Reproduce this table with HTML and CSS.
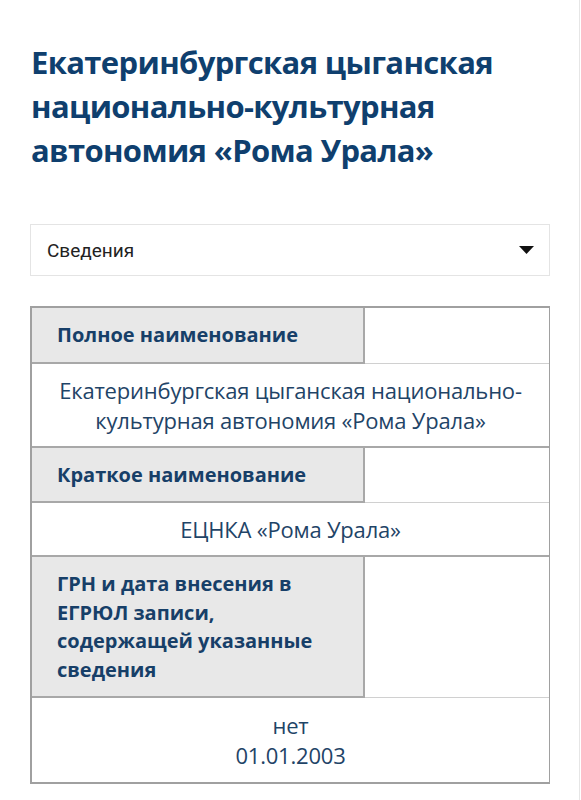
FILE: index.html
```html
<!DOCTYPE html>
<html lang="ru">
<head>
<meta charset="utf-8">
<title>Рома Урала</title>
<link rel="stylesheet" href="styles.css">
</head>
<body>
<div class="page">
  <h1 class="title">Екатеринбургская цыганская национально-культурная автономия «Рома Урала»</h1>
  <div class="select">
    <span class="select-text">Сведения</span>
    <svg class="select-arrow" width="15" height="8" viewBox="0 0 15 8"><path d="M0 0H15L7.5 8Z" fill="#111"/></svg>
  </div>
  <div class="info">
    <div class="row">
      <div class="label">Полное наименование</div>
      <div class="blank"></div>
    </div>
    <div class="value">Екатеринбургская цыганская национально-культурная автономия «Рома Урала»</div>
    <div class="row">
      <div class="label">Краткое наименование</div>
      <div class="blank"></div>
    </div>
    <div class="value">ЕЦНКА «Рома Урала»</div>
    <div class="row">
      <div class="label">ГРН и дата внесения в ЕГРЮЛ записи, содержащей указанные сведения</div>
      <div class="blank"></div>
    </div>
    <div class="value value-last">нет<br>01.01.2003</div>
  </div>
</div>
</body>
</html>
```

FILE: styles.css
```css
html, body {
  margin: 0;
  padding: 0;
  background: #fff;
}
.page {
  width: 580px;
  min-height: 800px;
  box-sizing: border-box;
  border-right: 1px solid #e6e6e6;
  padding: 40px 29px 0 30px;
}
.title {
  margin: 0 0 52px 1px;
  font-family: "Open Sans", sans-serif;
  font-weight: 700;
  font-size: 31px;
  line-height: 44px;
  color: #0f3f6e;
  letter-spacing: -0.65px;
}
.select {
  height: 52px;
  box-sizing: border-box;
  border: 1px solid #e4e4e4;
  display: flex;
  align-items: center;
  justify-content: space-between;
  padding: 0 15px 0 16px;
  margin-bottom: 30px;
}
.select-text {
  font-family: Roboto, sans-serif;
  font-size: 19px;
  color: #222;
}
.select-arrow {
  display: block;
}
.info {
  border: 2px solid #a0a0a0;
  border-right-width: 1px;
}
.row {
  display: grid;
  grid-template-columns: 333px 1fr;
}
.label {
  background: #e8e8e8;
  border-right: 2px solid #a8a8a8;
  border-bottom: 2px solid #a8a8a8;
  padding: 13px 40px 12px 25px;
  font-family: "Open Sans", sans-serif;
  font-weight: 700;
  font-size: 20px;
  line-height: 28.5px;
  color: #173f68;
}
.blank {
  border-bottom: 1px solid #d0d0d0;
}
.value {
  border-bottom: 2px solid #a8a8a8;
  padding: 11px 20px 11px;
  text-align: center;
  font-family: "Open Sans", sans-serif;
  font-size: 22px;
  line-height: 30px;
  color: #1f4467;
  letter-spacing: -0.2px;
}
.value-last {
  border-bottom: none;
  padding: 12px 20px 12px;
}
```
